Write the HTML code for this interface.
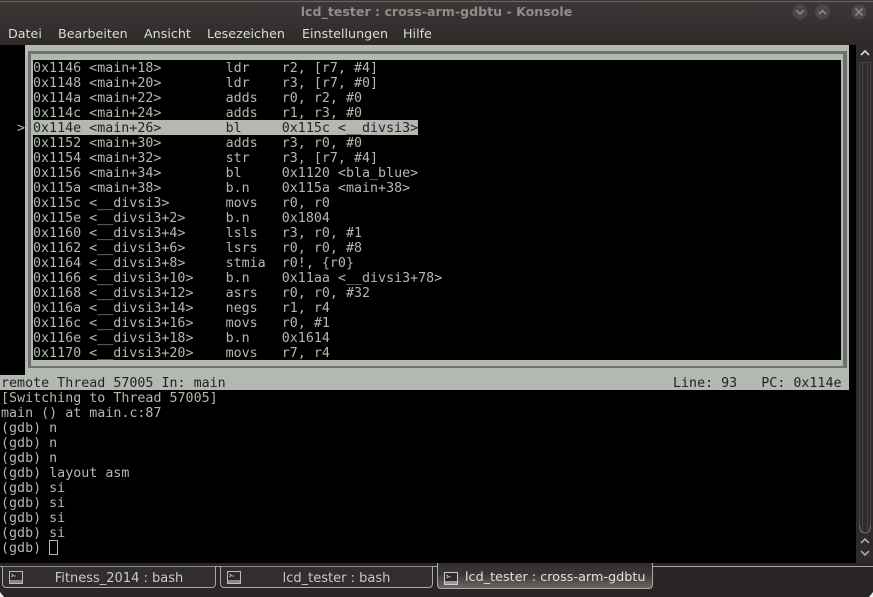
<!DOCTYPE html>
<html><head><meta charset="utf-8"><style>
html,body{margin:0;padding:0;background:#2a2626}
#w{position:relative;width:873px;height:597px;overflow:hidden;background:#2a2625;font-family:"DejaVu Sans",sans-serif;filter:blur(.3px)}
#w div,#w pre,#w svg{position:absolute;margin:0}
pre{font:13.33px/15px "DejaVu Sans Mono",monospace;color:#b3b8b1}
.m{top:24px;font-size:12.7px;line-height:18px;color:#dcdcd8}
.tab{border:1px solid #aaa9a5;border-top-color:#8e8c89;box-sizing:border-box;top:566px;height:22px;border-radius:0 0 4px 4px;background:#322e2d;color:#c9c9c5;font-size:13px;line-height:21px;text-align:center}
</style></head><body><div id="w">
<div style="left:0;top:0;width:873px;height:45px;background:linear-gradient(#3d3837,#2e2a29)"></div>
<div style="left:0;top:1px;width:873px;height:1px;background:#6a6664"></div>
<div style="left:0;top:3px;width:873px;text-align:center;font-size:12.6px;line-height:18px;font-weight:bold;color:#8f8d8b">lcd_tester : cross-arm-gdbtu - Konsole</div>
<svg style="left:790px;top:3px" width="83" height="18" fill="none" stroke="#8a8785" stroke-width="1.6">
<circle cx="10" cy="9" r="7.5" fill="#4c4847" stroke="none"/><path d="M6.5 7.5L10 11L13.5 7.5"/>
<circle cx="32.5" cy="9" r="7.5" fill="#4c4847" stroke="none"/><path d="M29 11L32.5 7.5L36 11"/>
<circle cx="69" cy="9" r="7.5" fill="#4c4847" stroke="none"/><path d="M65.5 5.5L72.5 12.5M72.5 5.5L65.5 12.5"/>
</svg>
<div class="m" style="left:8px;top:25px">Datei</div>
<div class="m" style="left:58px;top:25px">Bearbeiten</div>
<div class="m" style="left:144px;top:25px">Ansicht</div>
<div class="m" style="left:207px;top:25px">Lesezeichen</div>
<div class="m" style="left:302px;top:25px">Einstellungen</div>
<div class="m" style="left:403px;top:25px">Hilfe</div>

<div style="left:0;top:45px;width:856px;height:518px;background:#000"></div>
<div style="left:25px;top:45px;width:824px;height:330px;background:#b3b8b1"></div>
<div style="left:28px;top:51px;width:819px;height:317px;background:#6e726d"></div>
<div style="left:31px;top:54px;width:812px;height:312px;background:#b3b8b1"></div>
<div style="left:33px;top:60px;width:808px;height:300px;background:#000"></div>
<div style="left:33px;top:120px;width:385px;height:15px;background:#b3b8b1"></div>
<div style="left:0;top:375px;width:849px;height:15px;background:#b3b8b1"></div>
<pre style="left:17px;top:121px">&gt;</pre>
<pre style="left:33px;top:61px">0x1146 &lt;main+18&gt;        ldr    r2, [r7, #4]
0x1148 &lt;main+20&gt;        ldr    r3, [r7, #0]
0x114a &lt;main+22&gt;        adds   r0, r2, #0
0x114c &lt;main+24&gt;        adds   r1, r3, #0
<span style="color:#222522">0x114e &lt;main+26&gt;        bl     0x115c &lt;__divsi3&gt;</span>
0x1152 &lt;main+30&gt;        adds   r3, r0, #0
0x1154 &lt;main+32&gt;        str    r3, [r7, #4]
0x1156 &lt;main+34&gt;        bl     0x1120 &lt;bla_blue&gt;
0x115a &lt;main+38&gt;        b.n    0x115a &lt;main+38&gt;
0x115c &lt;__divsi3&gt;       movs   r0, r0
0x115e &lt;__divsi3+2&gt;     b.n    0x1804
0x1160 &lt;__divsi3+4&gt;     lsls   r3, r0, #1
0x1162 &lt;__divsi3+6&gt;     lsrs   r0, r0, #8
0x1164 &lt;__divsi3+8&gt;     stmia  r0!, {r0}
0x1166 &lt;__divsi3+10&gt;    b.n    0x11aa &lt;__divsi3+78&gt;
0x1168 &lt;__divsi3+12&gt;    asrs   r0, r0, #32
0x116a &lt;__divsi3+14&gt;    negs   r1, r4
0x116c &lt;__divsi3+16&gt;    movs   r0, #1
0x116e &lt;__divsi3+18&gt;    b.n    0x1614
0x1170 &lt;__divsi3+20&gt;    movs   r7, r4</pre>
<pre style="left:1px;top:376px;color:#222522">remote Thread 57005 In: main</pre>
<pre style="left:673px;top:376px;color:#222522">Line: 93   PC: 0x114e</pre>
<pre style="left:1px;top:391px">[Switching to Thread 57005]
main () at main.c:87
(gdb) n
(gdb) n
(gdb) n
(gdb) layout asm
(gdb) si
(gdb) si
(gdb) si
(gdb) si
(gdb) </pre>
<div style="left:49px;top:540px;width:7px;height:13px;border:1px solid #b3b8b1"></div>

<div style="left:856px;top:45px;width:17px;height:518px;background:#2f2b2a"></div>
<svg style="left:857px;top:45px" width="16" height="518" fill="none">
<path d="M2.5 480V17.5H13.5V480M5.5 18V486M10.5 18V486" stroke="#474342"/>
<path d="M2.5 480C2.5 486 5 488 8 488C11 488 13.5 486 13.5 480" stroke="#77736f"/>
<path d="M4 10L8 6L12 10" stroke="#d0d0cc" stroke-width="1.8"/>
<path d="M4 498L8 494L12 498" stroke="#aaa9a5" stroke-width="1.6"/>
<path d="M4 506L8 510L12 506" stroke="#aaa9a5" stroke-width="1.6"/>
</svg>

<div style="left:0;top:563px;width:873px;height:34px;background:#2a2625"></div>
<div style="left:0;top:566px;width:873px;height:1px;background:#a5a4a0"></div>
<div class="tab" style="left:2px;width:214px"><span style="position:relative;left:10px;top:1px">Fitness_2014 : bash</span></div>
<div class="tab" style="left:220px;width:213px"><span style="position:relative;left:10px;top:1px">lcd_tester : bash</span></div>
<div class="tab" style="left:437px;width:216px;top:563px;height:26px;border-top:0;background:linear-gradient(#343030,#3a3635 45%,#6a6765);color:#e0e0dc;text-align:left;padding-left:27px;line-height:30px;font-size:12.8px">lcd_tester : cross-arm-gdbtu</div>
<svg style="left:9px;top:571px" width="14" height="13"><rect x=".5" y=".5" width="13" height="12" fill="#2e2a29" stroke="#bbb"/><rect x="1" y="9" width="12" height="3" fill="#8a8886"/><path d="M2.5 3L4.5 4.5L2.5 6M5 5H7" stroke="#ccc" fill="none" stroke-width=".8"/></svg>
<svg style="left:227px;top:571px" width="14" height="13"><rect x=".5" y=".5" width="13" height="12" fill="#2e2a29" stroke="#bbb"/><rect x="1" y="9" width="12" height="3" fill="#8a8886"/><path d="M2.5 3L4.5 4.5L2.5 6M5 5H7" stroke="#ccc" fill="none" stroke-width=".8"/></svg>
<svg style="left:444px;top:572px" width="14" height="13"><rect x=".5" y=".5" width="13" height="12" fill="#2e2a29" stroke="#ccc"/><rect x="1" y="9" width="12" height="3" fill="#9a9896"/><path d="M2.5 3L4.5 4.5L2.5 6M5 5H7" stroke="#ddd" fill="none" stroke-width=".8"/></svg>
<svg style="left:0;top:591px" width="873" height="6"><path d="M0 1V6H4Z" fill="#eee"/><path d="M873 1V6H869Z" fill="#eee"/></svg>
</div></body></html>
